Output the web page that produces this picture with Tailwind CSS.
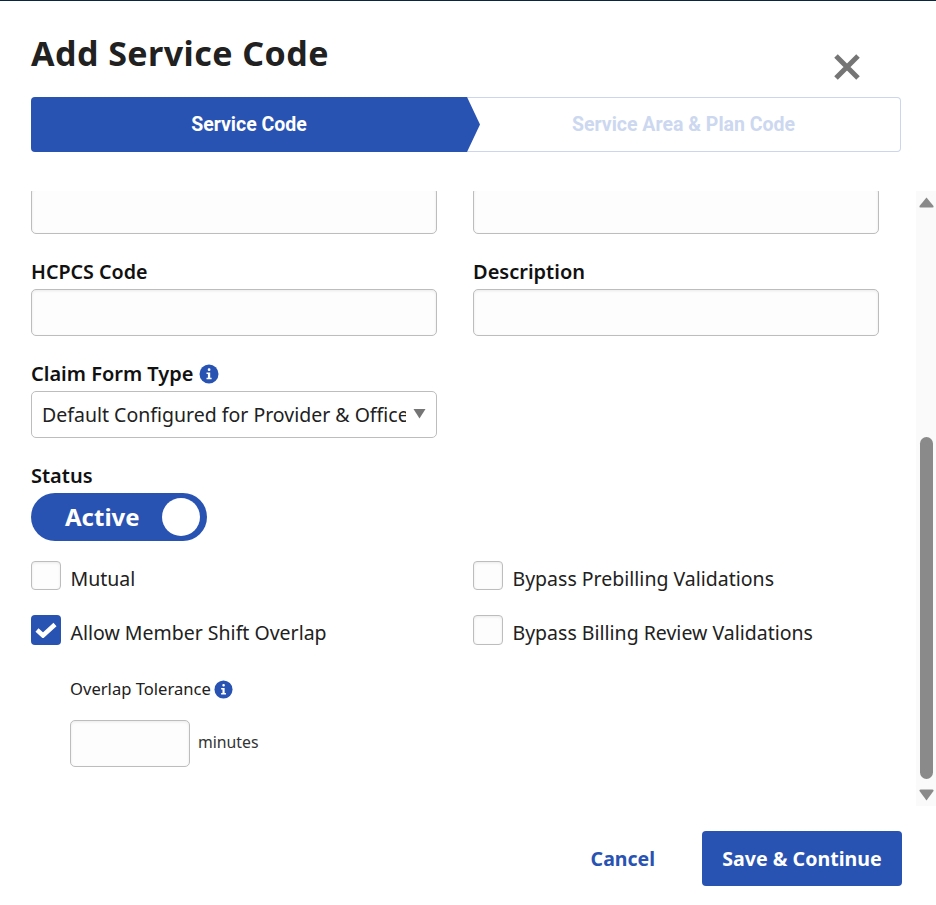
<!DOCTYPE html>
<html lang="en">
<head>
  <meta charset="UTF-8" />
  <title>Add Service Code</title>
  <script src="https://cdn.jsdelivr.net/npm/@tailwindcss/browser@4"></script>
</head>
<body class="bg-white font-['Noto_Sans',sans-serif] text-[#212121]">
  <div class="w-[936px] h-[905px] overflow-hidden border-t border-[#0a2540] flex flex-col">

    <!-- Header -->
    <div class="flex justify-between pl-[31px] pr-[76px] h-[96px]">
      <h1 class="mt-[29px] text-[34px] leading-[46px] font-bold tracking-[0.45px] text-[#212121]">Add Service Code</h1>
      <svg class="mt-[53px] w-[26px] h-[26px]" viewBox="0 0 26 26">
        <path d="M2 2 L24 24 M24 2 L2 24" stroke="#757575" stroke-width="5" fill="none" />
      </svg>
    </div>

    <!-- Stepper -->
    <div class="ml-[31px] w-[870px] h-[55px] flex font-['Roboto',sans-serif] font-bold text-[19.5px]">
      <div class="w-[436px] bg-[#2953b2] text-white rounded-l-[4px] flex items-center justify-center">Service Code</div>
      <svg class="relative z-10 w-[13px] h-[55px] shrink-0" viewBox="0 0 13 55"><polygon points="0,0 13,27.5 0,55" fill="#2953b2" /></svg>
      <div class="flex-1 -ml-[13px] border border-l-0 border-[#ccd5ea] rounded-r-[4px] flex items-center justify-center text-[#ccd7f0]">Service Area &amp; Plan Code</div>
    </div>

    <!-- Scrolling form -->
    <div class="mt-[39px] h-[615px] flex overflow-hidden">
      <div class="w-[916px] pl-[31px] overflow-hidden">
        <div class="-mt-[4px] grid grid-cols-[406px_406px] gap-x-[36px]">
          <input type="text" class="h-[47px] border border-[#bdbdbd] rounded-[5px] bg-[#fdfdfd] shadow-[inset_0_1px_3px_rgba(0,0,0,0.08)]" />
          <input type="text" class="h-[47px] border border-[#bdbdbd] rounded-[5px] bg-[#fdfdfd] shadow-[inset_0_1px_3px_rgba(0,0,0,0.08)]" />

          <div class="mt-[25px]">
            <label class="block h-[30px] text-[19.7px] leading-[26px] font-semibold text-[#111]">HCPCS Code</label>
            <input type="text" class="block w-full h-[47px] border border-[#bdbdbd] rounded-[5px] bg-[#fdfdfd] shadow-[inset_0_1px_3px_rgba(0,0,0,0.08)]" />
          </div>
          <div class="mt-[25px]">
            <label class="block h-[30px] text-[20px] leading-[26px] font-semibold text-[#111]">Description</label>
            <input type="text" class="block w-full h-[47px] border border-[#bdbdbd] rounded-[5px] bg-[#fdfdfd] shadow-[inset_0_1px_3px_rgba(0,0,0,0.08)]" />
          </div>

          <div class="mt-[25px] col-span-2 w-[406px]">
            <label class="flex items-center gap-[5px] h-[30px] pb-[4px] text-[20px] leading-[26px] font-semibold text-[#111]">
              Claim Form Type
              <svg class="w-[20px] h-[20px]" viewBox="0 0 20 20">
                <circle cx="10" cy="10" r="9.5" fill="#2953b2" />
                <rect x="8.8" y="4.3" width="2.6" height="2.6" rx="1" fill="#fff" />
                <path d="M7.5 8.5 H11.2 V13.7 H12.6 V15.2 H7.5 V13.7 H8.9 V10 H7.5 Z" fill="#fff" />
              </svg>
            </label>
            <div class="relative">
              <select class="block w-full h-[47px] appearance-none border border-[#bdbdbd] rounded-[5px] bg-white pl-[10px] pr-[30px] text-[19.5px] text-[#212121]">
                <option>Default Configured for Provider &amp; Office</option>
              </select>
              <svg class="absolute right-[11px] top-[18px] w-[13px] h-[10px]" viewBox="0 0 13 10"><polygon points="0.5,0 12.5,0 6.5,9.5" fill="#757575" /></svg>
            </div>
          </div>

          <div class="mt-[25px] col-span-2">
            <label class="block h-[30px] text-[20px] leading-[26px] font-semibold text-[#111]">Status</label>
            <div class="w-[176px] h-[48px] rounded-full bg-[#2953b2] flex items-center justify-between pl-[34px] pr-[7px]">
              <span class="text-[24px] font-bold text-white">Active</span>
              <span class="w-[38px] h-[38px] rounded-full bg-white"></span>
            </div>
          </div>

          <label class="mt-[20px] flex items-start gap-[9.5px] h-[30px] text-[19.5px] leading-[26px]">
            <span class="w-[30px] h-[29px] border border-[#bdbdbd] rounded-[4px] bg-[#fdfdfd] shadow-[inset_0_1px_3px_rgba(0,0,0,0.08)]"></span>
            <span class="mt-[5px]">Mutual</span>
          </label>
          <label class="mt-[20px] flex items-start gap-[9.5px] h-[30px] text-[19.5px] leading-[26px]">
            <span class="w-[30px] h-[29px] border border-[#bdbdbd] rounded-[4px] bg-[#fdfdfd] shadow-[inset_0_1px_3px_rgba(0,0,0,0.08)]"></span>
            <span class="mt-[5px]">Bypass Prebilling Validations</span>
          </label>

          <label class="mt-[24px] flex items-start gap-[9.5px] h-[30px] text-[19.5px] leading-[26px]">
            <span class="w-[30px] h-[30px] rounded-[4px] bg-[#2953b2] flex items-center justify-center">
              <svg class="w-[22px] h-[16px]" viewBox="0 0 22 16"><path d="M2 8 L8 13.5 L20 2.5" stroke="#fff" stroke-width="4.5" fill="none" /></svg>
            </span>
            <span class="mt-[5px]">Allow Member Shift Overlap</span>
          </label>
          <label class="mt-[24px] flex items-start gap-[9.5px] h-[30px] text-[19.5px] leading-[26px]">
            <span class="w-[30px] h-[30px] border border-[#bdbdbd] rounded-[4px] bg-[#fdfdfd] shadow-[inset_0_1px_3px_rgba(0,0,0,0.08)]"></span>
            <span class="mt-[5px]">Bypass Billing Review Validations</span>
          </label>

          <div class="mt-[33px] col-span-2 pl-[39px]">
            <label class="flex items-center gap-[3.5px] h-[22px] text-[16.6px] leading-[22px] text-[#212121]">
              Overlap Tolerance
              <svg class="w-[19px] h-[19px]" viewBox="0 0 20 20">
                <circle cx="10" cy="10" r="9.5" fill="#2953b2" />
                <rect x="8.8" y="4.3" width="2.6" height="2.6" rx="1" fill="#fff" />
                <path d="M7.5 8.5 H11.2 V13.7 H12.6 V15.2 H7.5 V13.7 H8.9 V10 H7.5 Z" fill="#fff" />
              </svg>
            </label>
            <div class="mt-[20px] flex items-center gap-[8px]">
              <input type="text" class="w-[120px] h-[47px] border border-[#bdbdbd] rounded-[5px] bg-[#fdfdfd] shadow-[inset_0_1px_3px_rgba(0,0,0,0.08)]" />
              <span class="-mt-[2px] text-[15.8px] text-[#333]">minutes</span>
            </div>
          </div>
        </div>
      </div>

      <!-- Scrollbar -->
      <div class="w-[20px] bg-[#fafafa] flex flex-col items-center pl-[1px] pt-[6px]">
        <svg class="w-[15px] h-[11px] shrink-0" viewBox="0 0 15 11"><path d="M7.5 0.5 L14.5 9 Q15 10.5 13.5 10.5 H1.5 Q0 10.5 0.5 9 Z" fill="#8a8a8a" /></svg>
        <div class="mt-[229px] w-[13px] h-[342px] shrink-0 rounded-full bg-[#8a8a8a]"></div>
        <svg class="mt-[10px] w-[15px] h-[12px] shrink-0" viewBox="0 0 15 12"><path d="M7.5 11.5 L14.5 2 Q15 0.5 13.5 0.5 H1.5 Q0 0.5 0.5 2 Z" fill="#8a8a8a" /></svg>
      </div>
    </div>

    <!-- Footer -->
    <div class="mt-[25px] pr-[34px] flex justify-end items-center gap-[47px]">
      <a class="text-[19.5px] font-bold text-[#2953b2]">Cancel</a>
      <button class="w-[200px] h-[55px] rounded-[4px] bg-[#2953b2] text-white text-[19.6px] font-bold">Save &amp; Continue</button>
    </div>
  </div>
</body>
</html>
